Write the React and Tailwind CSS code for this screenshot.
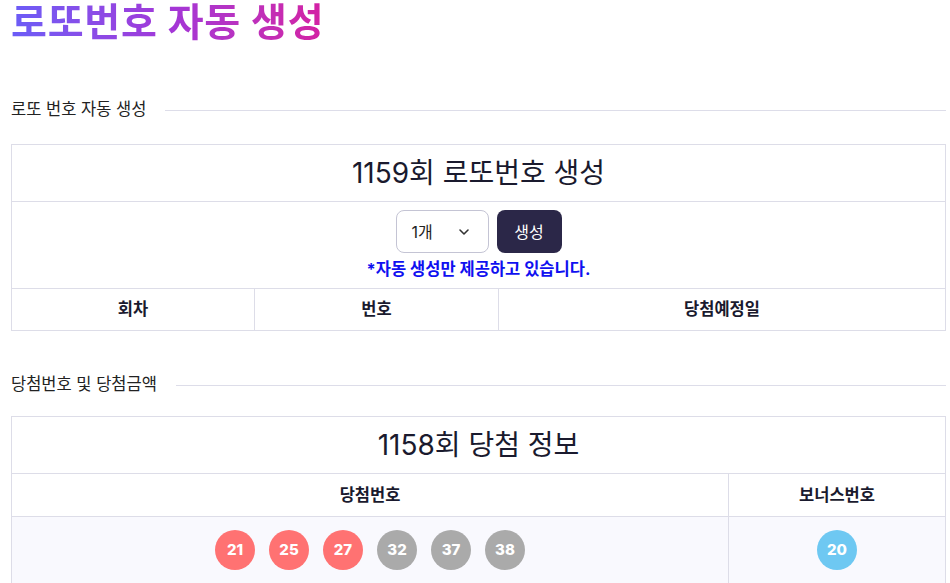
import React from "react";

const FONT = { fontFamily: 'Inter, "Noto Sans CJK KR", sans-serif' };

function SectionLabel({ children }) {
  return (
    <div className="flex items-center gap-[19px]">
      <span className="text-[16.5px] leading-[20px] text-[#222222] whitespace-nowrap">{children}</span>
      <div className="flex-1 h-px bg-[#dddde9] mt-[3px]" />
    </div>
  );
}

function Ball({ n, color }) {
  return (
    <div
      className={`w-[40px] h-[40px] rounded-full flex items-center justify-center text-white text-[15px] font-extrabold ${color}`}
    >
      {n}
    </div>
  );
}

export default function App() {
  const main = [21, 25, 27, 32, 37, 38];
  return (
    <div className="bg-white min-h-[583px] pl-[11px] pr-[4px] text-[#1a1a2e]" style={FONT}>
      <h1 className="inline-block text-[39px] tracking-[0.02em] font-bold leading-[40px] pt-[2px] bg-gradient-to-r from-[#6a5cf7] via-[#a236d8] to-[#d41fa3] bg-clip-text text-transparent whitespace-nowrap">
        로또번호 자동 생성
      </h1>

      <div className="mt-[57px]">
        <SectionLabel>로또 번호 자동 생성</SectionLabel>
      </div>

      <div className="mt-[25px] border border-[#dddde8]">
        <div className="h-[57px] flex items-center justify-center text-[28px] text-[#1a1a2e] border-b border-[#dddde8]">
          1159회 로또번호 생성
        </div>
        <div className="h-[87px] border-b border-[#dddde8] flex flex-col items-center pt-[8px]">
          <div className="flex gap-[8px]">
            <div className="w-[93px] h-[43px] border border-[#c4c4d4] rounded-[8px] flex items-center justify-between pl-[15px] pr-[18px] text-[16px] text-[#222]">
              <span>1개</span>
              <svg width="12" height="8" viewBox="0 0 12 8" fill="none">
                <path d="M2 2l4 4 4-4" stroke="#333" strokeWidth="1.6" strokeLinecap="round" strokeLinejoin="round" />
              </svg>
            </div>
            <div className="w-[65px] h-[43px] rounded-[8px] bg-[#2b2748] text-white text-[16px] flex items-center justify-center">
              생성
            </div>
          </div>
          <div className="mt-[5px] text-[16.5px] font-bold text-[#1010f0] leading-[22px]">
            *자동 생성만 제공하고 있습니다.
          </div>
        </div>
        <div className="grid grid-cols-[243px_244px_1fr] h-[41px] text-[16.5px] font-bold text-[#1a1a2e]">
          <div className="flex items-center justify-center border-r border-[#dddde8]">회차</div>
          <div className="flex items-center justify-center border-r border-[#dddde8]">번호</div>
          <div className="flex items-center justify-center">당첨예정일</div>
        </div>
      </div>

      <div className="mt-[43px]">
        <SectionLabel>당첨번호 및 당첨금액</SectionLabel>
      </div>

      <div className="mt-[22px] border border-[#dddde8]">
        <div className="h-[57px] flex items-center justify-center text-[28px] text-[#1a1a2e] border-b border-[#dddde8]">
          1158회 당첨 정보
        </div>
        <div className="grid grid-cols-[717px_1fr] h-[43px] text-[16.5px] font-bold text-[#1a1a2e] border-b border-[#dddde8]">
          <div className="flex items-center justify-center border-r border-[#dddde8]">당첨번호</div>
          <div className="flex items-center justify-center">보너스번호</div>
        </div>
        <div className="grid grid-cols-[717px_1fr] bg-[#f9f9fe]">
          <div className="flex items-start justify-center gap-[14px] pt-[13px] pb-[13px] border-r border-[#dddde8]">
            {main.map((n, i) => (
              <Ball key={n} n={n} color={i < 3 ? "bg-[#ff7272]" : "bg-[#aaaaaa]"} />
            ))}
          </div>
          <div className="flex items-start justify-center pt-[13px] pb-[13px]">
            <Ball n={20} color="bg-[#6ec8f2]" />
          </div>
        </div>
      </div>
    </div>
  );
}
